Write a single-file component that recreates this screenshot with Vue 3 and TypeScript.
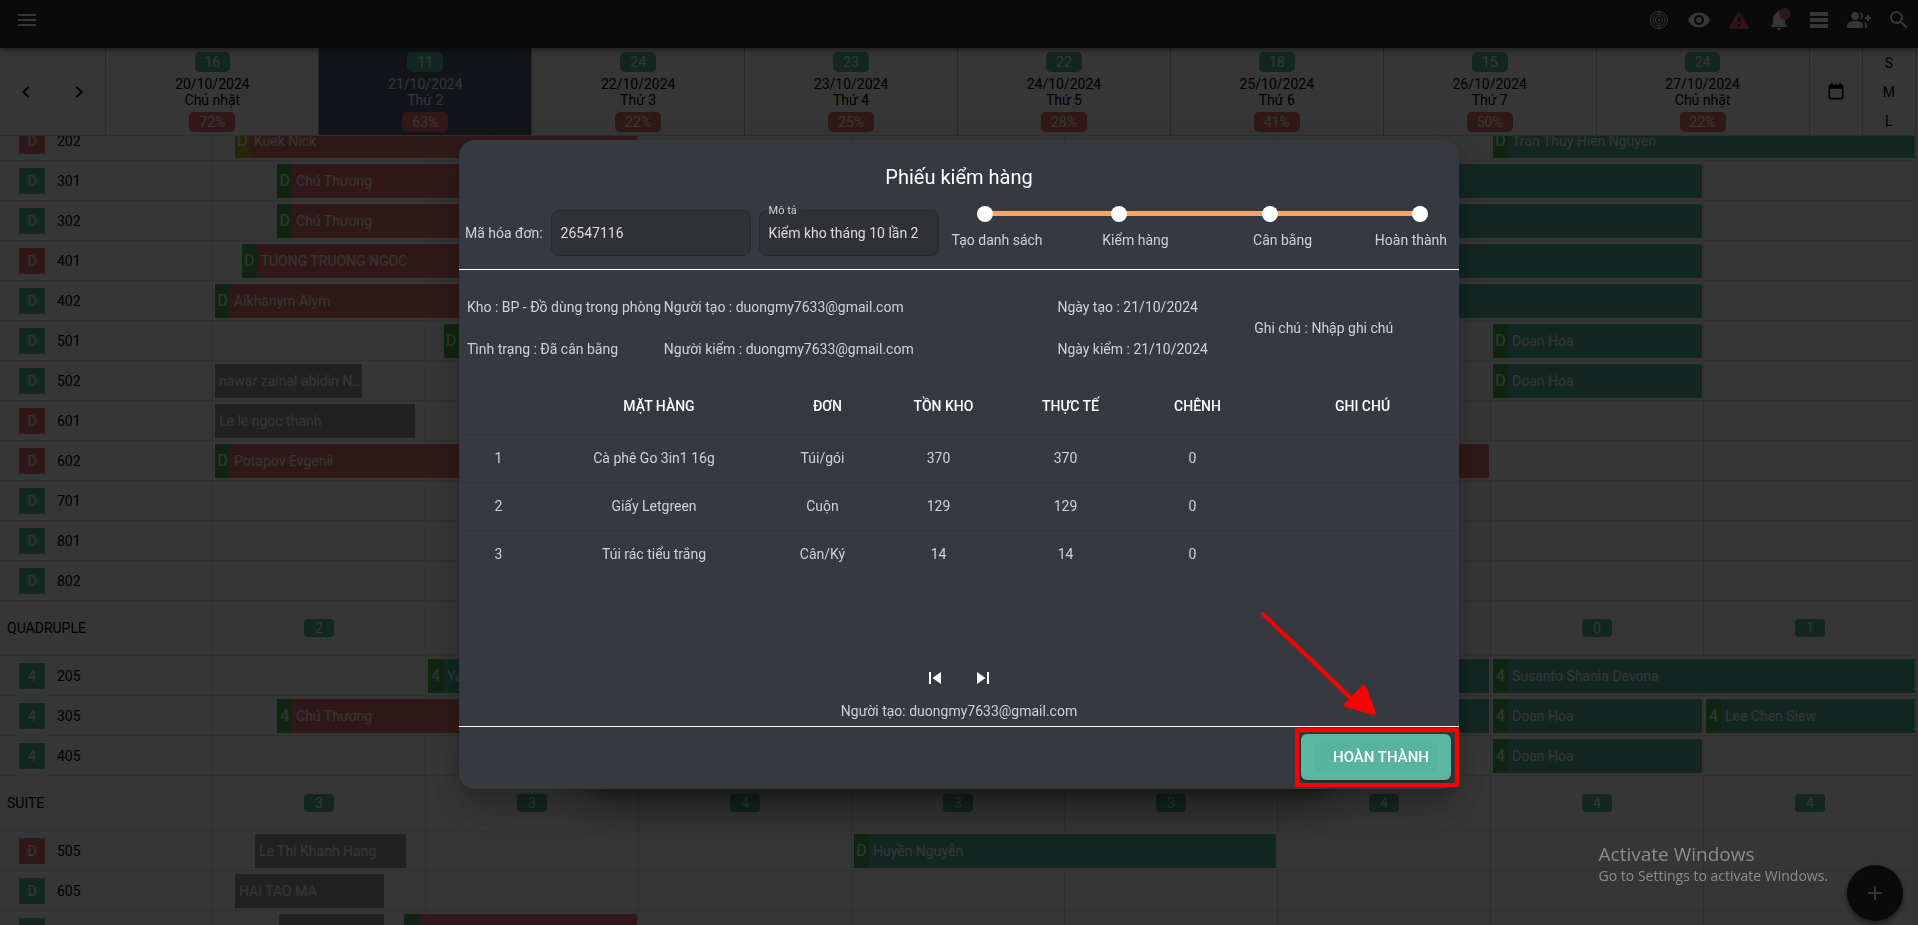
<script setup lang="ts">
import { ref } from 'vue'

type Tone = 'red' | 'teal' | 'grey'

interface Day { free: number; date: string; name: string; rate: string; today?: boolean }
/* start and end are quarter hours counted from the first visible day */
interface Booking { start: number; end: number; tone: Tone; tag?: string; name?: string; late?: boolean }
interface Room { kind: 'room'; id: string; badge: string; busy?: boolean; bookings: Booking[] }
interface Group { kind: 'group'; id: string; counts: (number | null)[] }

const days: Day[] = [
  { free: 16, date: '20/10/2024', name: 'Chủ nhật', rate: '72%' },
  { free: 11, date: '21/10/2024', name: 'Thứ 2', rate: '63%', today: true },
  { free: 24, date: '22/10/2024', name: 'Thứ 3', rate: '22%' },
  { free: 23, date: '23/10/2024', name: 'Thứ 4', rate: '25%' },
  { free: 22, date: '24/10/2024', name: 'Thứ 5', rate: '28%' },
  { free: 18, date: '25/10/2024', name: 'Thứ 6', rate: '41%' },
  { free: 15, date: '26/10/2024', name: 'Thứ 7', rate: '50%' },
  { free: 24, date: '27/10/2024', name: 'Chủ nhật', rate: '22%' },
]

const rows: (Room | Group)[] = [
  { kind: 'room', id: '202', badge: 'D', busy: true, bookings: [
    { start: 9, end: 192, tone: 'red', tag: 'D', name: 'Kuek Nick', late: true },
    { start: 576, end: 768, tone: 'teal', tag: 'D', name: 'Tran Thuy Hien Nguyen' },
  ] },
  { kind: 'room', id: '301', badge: 'D', bookings: [
    { start: 28, end: 192, tone: 'red', tag: 'D', name: 'Chú Thương' },
    { start: 384, end: 672, tone: 'teal' },
  ] },
  { kind: 'room', id: '302', badge: 'D', bookings: [
    { start: 28, end: 192, tone: 'red', tag: 'D', name: 'Chú Thương' },
    { start: 384, end: 672, tone: 'teal' },
  ] },
  { kind: 'room', id: '401', badge: 'D', busy: true, bookings: [
    { start: 12, end: 192, tone: 'red', tag: 'D', name: 'TUONG TRUONG NGOC' },
    { start: 384, end: 672, tone: 'teal' },
  ] },
  { kind: 'room', id: '402', badge: 'D', bookings: [
    { start: 0, end: 192, tone: 'red', tag: 'D', name: 'Aikhanym Alym' },
    { start: 384, end: 672, tone: 'teal' },
  ] },
  { kind: 'room', id: '501', badge: 'D', bookings: [
    { start: 103, end: 192, tone: 'teal', tag: 'D' },
    { start: 576, end: 672, tone: 'teal', tag: 'D', name: 'Doan Hoa' },
  ] },
  { kind: 'room', id: '502', badge: 'D', bookings: [
    { start: 0, end: 68, tone: 'grey', name: 'nawar zainal abidin Noor' },
    { start: 576, end: 672, tone: 'teal', tag: 'D', name: 'Doan Hoa' },
  ] },
  { kind: 'room', id: '601', badge: 'D', busy: true, bookings: [
    { start: 0, end: 92, tone: 'grey', name: 'Le le ngoc thanh' },
  ] },
  { kind: 'room', id: '602', badge: 'D', busy: true, bookings: [
    { start: 0, end: 576, tone: 'red', tag: 'D', name: 'Potapov Evgenii' },
  ] },
  { kind: 'room', id: '701', badge: 'D', bookings: [] },
  { kind: 'room', id: '801', badge: 'D', bookings: [] },
  { kind: 'room', id: '802', badge: 'D', bookings: [] },
  { kind: 'group', id: 'QUADRUPLE', counts: [2, null, null, null, null, null, 0, 1] },
  { kind: 'room', id: '205', badge: '4', bookings: [
    { start: 96, end: 576, tone: 'teal', tag: '4', name: 'Ya' },
    { start: 576, end: 768, tone: 'teal', tag: '4', name: 'Susanto Shania Devona' },
  ] },
  { kind: 'room', id: '305', badge: '4', bookings: [
    { start: 28, end: 192, tone: 'red', tag: '4', name: 'Chú Thương' },
    { start: 384, end: 576, tone: 'teal' },
    { start: 576, end: 672, tone: 'teal', tag: '4', name: 'Doan Hoa' },
    { start: 672, end: 768, tone: 'teal', tag: '4', name: 'Lee Chen Siew' },
  ] },
  { kind: 'room', id: '405', badge: '4', bookings: [
    { start: 576, end: 672, tone: 'teal', tag: '4', name: 'Doan Hoa' },
  ] },
  { kind: 'group', id: 'SUITE', counts: [3, 3, 4, 3, 3, 4, 4, 4] },
  { kind: 'room', id: '505', badge: 'D', busy: true, bookings: [
    { start: 18, end: 88, tone: 'grey', name: 'Le Thi Khanh Hang' },
    { start: 288, end: 480, tone: 'teal', tag: 'D', name: 'Huyền Nguyễn' },
  ] },
  { kind: 'room', id: '605', badge: 'D', bookings: [
    { start: 9, end: 78, tone: 'grey', name: 'HAI TAO MA' },
  ] },
  { kind: 'room', id: '', badge: '', bookings: [
    { start: 29, end: 78, tone: 'grey' },
    { start: 85, end: 192, tone: 'red', tag: ' ' },
  ] },
]

const code = ref('26547116')
const note = ref('Kiểm kho tháng 10 lần 2')
const steps = ['Tạo danh sách', 'Kiểm hàng', 'Cân bằng', 'Hoàn thành']
const headings = ['', 'MẶT HÀNG', 'ĐƠN', 'TỒN KHO', 'THỰC TẾ', 'CHÊNH', 'GHI CHÚ']
const items = [
  { name: 'Cà phê Go 3in1 16g', unit: 'Túi/gói', stock: 370, real: 370, diff: 0 },
  { name: 'Giấy Letgreen', unit: 'Cuộn', stock: 129, real: 129, diff: 0 },
  { name: 'Túi rác tiểu trắng', unit: 'Cân/Ký', stock: 14, real: 14, diff: 0 },
]
</script>

<template>
  <div class="app">
    <header class="topbar">
      <button class="icon-btn menu" aria-label="Menu">
        <svg viewBox="0 0 24 24"><path d="M3 6h18v2H3zm0 5h18v2H3zm0 5h18v2H3z" /></svg>
      </button>
      <nav class="tools">
        <button class="icon-btn" aria-label="Radar">
          <svg viewBox="0 0 24 24" class="line">
            <circle cx="12" cy="12" r="8.5" />
            <path d="M10.600 6.200a6 6 0 0 0 0 11.600M13.400 6.200a6 6 0 0 1 0 11.600" />
            <path d="M10.800 8.700a3.500 3.500 0 0 0 0 6.600M13.200 8.700a3.500 3.500 0 0 1 0 6.600" />
            <path d="M12 4v5.500M12 14.500V20" />
            <circle cx="12" cy="12" r="1" />
          </svg>
        </button>
        <button class="icon-btn" aria-label="Xem">
          <svg viewBox="0 0 24 24"><path d="M12 4.5C7 4.5 2.73 7.61 1 12c1.73 4.39 6 7.5 11 7.5s9.27-3.11 11-7.5c-1.73-4.39-6-7.5-11-7.5zM12 17c-2.76 0-5-2.24-5-5s2.24-5 5-5 5 2.24 5 5-2.24 5-5 5zm0-8c-1.66 0-3 1.34-3 3s1.34 3 3 3 3-1.34 3-3-1.34-3-3-3z" /></svg>
        </button>
        <button class="icon-btn warn" aria-label="Cảnh báo">
          <svg viewBox="0 0 24 24"><path d="M3.5 21h17c1.2 0 1.9-1.2 1.3-2.2L13.2 4.5c-.6-1-1.900-1-2.500 0L2.200 18.800c-.6 1 .1 2.200 1.300 2.200zM13 18h-2v-2h2zm0-4h-2V9h2z" /></svg>
        </button>
        <button class="icon-btn bell" aria-label="Thông báo">
          <svg viewBox="0 0 24 24"><path d="M12 22c1.100 0 2-.9 2-2h-4c0 1.100.89 2 2 2zm6-6v-5c0-3.070-1.640-5.640-4.500-6.320V4c0-.83-.67-1.500-1.500-1.500s-1.500.67-1.500 1.500v.68C7.630 5.360 6 7.920 6 11v5l-2 2v1h16v-1l-2-2z" /></svg>
          <span class="dot"></span>
        </button>
        <button class="icon-btn" aria-label="Danh sách">
          <svg viewBox="0 0 24 24"><path d="M3 4h18v4H3zm0 6h18v4H3zm0 6h18v4H3z" /></svg>
        </button>
        <button class="icon-btn" aria-label="Thêm khách">
          <svg viewBox="0 0 24 24"><path d="M22 9V7h-2v2h-2v2h2v2h2v-2h2V9zM8 12c2.210 0 4-1.790 4-4s-1.790-4-4-4-4 1.790-4 4 1.790 4 4 4zm0 1c-2.670 0-8 1.340-8 4v3h16v-3c0-2.660-5.330-4-8-4zm4.510-8.950C13.430 5.110 14 6.490 14 8s-.57 2.890-1.490 3.950C14.470 11.700 16 10.040 16 8s-1.530-3.700-3.490-3.950zM16.530 13.830C17.420 14.660 18 15.700 18 17v3h2v-3c0-1.450-1.590-2.510-3.470-3.170z" /></svg>
        </button>
        <button class="icon-btn" aria-label="Tìm kiếm">
          <svg viewBox="0 0 24 24"><path d="M15.500 14h-.79l-.28-.27A6.470 6.470 0 0 0 16 9.500 6.500 6.500 0 1 0 9.500 16c1.610 0 3.090-.59 4.230-1.570l.27.28v.79l5 4.990L20.490 19zm-6 0C7.010 14 5 11.990 5 9.500S7.010 5 9.500 5 14 7.010 14 9.500 11.990 14 9.500 14z" /></svg>
        </button>
      </nav>
    </header>

    <section class="days">
      <div class="pager-days">
        <button aria-label="Lùi"><svg viewBox="0 0 24 24"><path d="M15.410 7.410 14 6l-6 6 6 6 1.410-1.410L10.830 12z" /></svg></button>
        <button aria-label="Tiến"><svg viewBox="0 0 24 24"><path d="M10 6 8.590 7.410 13.170 12l-4.580 4.590L10 18l6-6z" /></svg></button>
      </div>
      <div v-for="d in days" :key="d.date" class="day" :class="{ today: d.today }">
        <span class="pill teal">{{ d.free }}</span>
        <span class="date">{{ d.date }}<br />{{ d.name }}</span>
        <span class="pill red">{{ d.rate }}</span>
      </div>
      <button class="calendar" aria-label="Chọn ngày">
        <svg viewBox="0 0 24 24"><path d="M19 19H5V8h14m-3-7v2H8V1H6v2H5c-1.110 0-2 .89-2 2v14a2 2 0 0 0 2 2h14a2 2 0 0 0 2-2V5c0-1.110-.9-2-2-2h-1V1" /></svg>
      </button>
      <div class="sizes">
        <button>S</button>
        <button>M</button>
        <button>L</button>
      </div>
    </section>

    <main class="board">
      <div class="rows">
        <div v-for="(row, i) in rows" :key="i" class="row" :class="row.kind">
          <template v-if="row.kind === 'room'">
            <div class="label">
              <span class="badge" :class="row.busy ? 'red' : 'teal'">{{ row.badge }}</span>
              <span>{{ row.id }}</span>
            </div>
            <div class="timeline">
              <div
                v-for="(b, j) in row.bookings"
                :key="j"
                class="booking"
                :class="b.tone"
                :style="{ gridColumn: `${b.start + 1} / ${b.end + 1}` }"
              >
                <span v-if="b.tag" class="tag" :class="{ late: b.late }">{{ b.tag }}</span>
                <span class="guest">{{ b.name }}</span>
              </div>
            </div>
          </template>
          <template v-else>
            <div class="label">{{ row.id }}</div>
            <div class="counts">
              <div v-for="(c, j) in row.counts" :key="j">
                <span v-if="c !== null" class="count teal">{{ c }}</span>
              </div>
            </div>
          </template>
        </div>
      </div>
    </main>

    <button class="fab" aria-label="Thêm">
      <svg viewBox="0 0 24 24"><path d="M19 13h-6v6h-2v-6H5v-2h6V5h2v6h6z" /></svg>
    </button>

    <div class="backdrop">
      <section class="dialog" role="dialog" aria-labelledby="dialog-title">
        <h1 id="dialog-title">Phiếu kiểm hàng</h1>

        <div class="form">
          <label for="code">Mã hóa đơn:</label>
          <input id="code" v-model="code" class="code" type="text" />
          <fieldset>
            <legend><label for="note">Mô tả</label></legend>
            <input id="note" v-model="note" type="text" />
          </fieldset>
          <div class="stepper">
            <div class="track">
              <i></i><i></i><i></i><i></i>
            </div>
            <ol>
              <li v-for="s in steps" :key="s">{{ s }}</li>
            </ol>
          </div>
        </div>

        <div class="info">
          <span>Kho : BP - Đồ dùng trong phòng</span>
          <span>Người tạo : duongmy7633@gmail.com</span>
          <span>Ngày tạo : 21/10/2024</span>
          <span class="remark">Ghi chú : Nhập ghi chú</span>
          <span>Tình trạng : Đã cân bằng</span>
          <span>Người kiểm : duongmy7633@gmail.com</span>
          <span>Ngày kiểm : 21/10/2024</span>
        </div>

        <div class="table-box">
          <table>
            <colgroup>
              <col class="c-index" /><col class="c-name" /><col class="c-unit" />
              <col class="c-num" /><col class="c-num" /><col class="c-num" /><col />
            </colgroup>
            <thead>
              <tr><th v-for="(h, i) in headings" :key="i">{{ h }}</th></tr>
            </thead>
            <tbody>
              <tr v-for="(it, i) in items" :key="it.name">
                <td>{{ i + 1 }}</td>
                <td>{{ it.name }}</td>
                <td>{{ it.unit }}</td>
                <td>{{ it.stock }}</td>
                <td>{{ it.real }}</td>
                <td>{{ it.diff }}</td>
                <td></td>
              </tr>
            </tbody>
          </table>
        </div>

        <div class="pager">
          <button aria-label="Trang đầu"><svg viewBox="0 0 24 24"><path d="M6 6h2v12H6zm3.500 6 8.500 6V6z" /></svg></button>
          <button aria-label="Trang cuối"><svg viewBox="0 0 24 24"><path d="m6 18 8.500-6L6 6zM16 6v12h2V6z" /></svg></button>
        </div>
        <p class="author">Người tạo: duongmy7633@gmail.com</p>

        <footer>
          <button class="done"><span>HOÀN THÀNH</span></button>
        </footer>

        <div class="mark"></div>
        <svg class="arrow" viewBox="0 0 120 110">
          <path d="M4 4 92 88" />
          <path class="head" d="M105 77 115 103 87 95z" />
        </svg>
      </section>
    </div>

    <aside class="activate">
      <strong>Activate Windows</strong>
      <span>Go to Settings to activate Windows.</span>
    </aside>
  </div>
</template>

<style>
body {
  margin: 0;
  background: #fff;
}
</style>

<style scoped>
.app {
  display: flex;
  flex-direction: column;
  height: 100vh;
  overflow: hidden;
  background: #fff;
  color: #000;
  font: 14px/16px Roboto, "Noto Sans", sans-serif;
}

button {
  display: flex;
  align-items: center;
  justify-content: center;
  padding: 0;
  border: 0;
  background: none;
  color: inherit;
  font: inherit;
  cursor: pointer;
}

svg {
  width: 24px;
  height: 24px;
  fill: currentColor;
}

.teal { background: #57b5a0; }
.red { background: #e57373; }
.grey { background: #9e9e9e; }

.topbar {
  display: flex;
  justify-content: space-between;
  flex: none;
  height: 48px;
  background: #2f2f2f;
  color: #fff;
  box-shadow: 0 2px 6px rgba(0, 0, 0, 0.5);
  z-index: 1;
}

.icon-btn {
  position: relative;
  width: 40px;
  height: 40px;
}

.menu { margin-left: 7px; }

.tools {
  display: flex;
  margin-right: -1px;
}

.warn { color: #e05a5a; }

.topbar .line {
  fill: none;
  stroke: currentColor;
  stroke-width: 1;
}

.dot {
  position: absolute;
  top: 8px;
  right: 8px;
  width: 12px;
  height: 12px;
  border-radius: 50%;
  background: #e57373;
}

.days {
  display: grid;
  grid-template-columns: 2fr repeat(8, 4fr) 1fr 1fr;
  flex: none;
  height: 88px;
  margin-right: 2px;
}

.days > * {
  box-sizing: border-box;
  min-width: 0;
  border-right: 1px solid #c4c4c4;
  border-bottom: 1px solid #d8d8d8;
}

.pager-days {
  display: grid;
  grid-template-columns: 1fr 1fr;
}

.day {
  display: flex;
  flex-direction: column;
  align-items: center;
  gap: 4px;
  padding-top: 4px;
  text-align: center;
}

.today {
  background: #52647a;
  color: #fff;
}

.pill {
  padding: 0 10px;
  border-radius: 5px;
  color: #fff;
  line-height: 20px;
}

.calendar {
  height: 100%;
}

.calendar svg {
  width: 20px;
  height: 20px;
}

.sizes {
  display: grid;
  grid-template-rows: repeat(3, 1fr);
}

.board {
  flex: 1;
  min-height: 0;
  overflow: hidden;
  margin-right: 1px;
}

.rows { margin-top: -15px; }

.row {
  display: grid;
  grid-template-columns: 1fr 8fr;
  box-sizing: border-box;
  height: 40px;
  border-bottom: 1px solid #e4e4e4;
}

.group { height: 55px; }

.label {
  display: flex;
  align-items: center;
  gap: 12px;
  box-sizing: border-box;
  padding-left: 19px;
  border-right: 1px solid #dcdcdc;
}

.group .label { padding-left: 7px; }

.badge {
  width: 26px;
  height: 26px;
  color: #fff;
  line-height: 26px;
  text-align: center;
}

.timeline {
  display: grid;
  grid-template-columns: repeat(768, minmax(0, 1fr));
  grid-template-rows: 34px;
  align-content: center;
  background: repeating-linear-gradient(to right, transparent 0, transparent calc(12.5% - 1px), #dcdcdc calc(12.5% - 1px), #dcdcdc 12.5%);
}

.booking {
  display: flex;
  align-items: center;
  grid-row: 1;
  min-width: 0;
  margin: 0 2px;
  overflow: hidden;
  color: #fff;
}

.tag {
  flex: none;
  width: 15px;
  height: 34px;
  background: #4caf50;
  font-size: 16px;
  line-height: 34px;
  text-align: center;
}

.tag.late { background: #afb42b; }

.guest {
  padding-left: 4px;
  overflow: hidden;
  text-overflow: ellipsis;
  white-space: nowrap;
}

.counts {
  display: grid;
  grid-template-columns: repeat(8, 1fr);
}

.counts > div {
  display: flex;
  align-items: center;
  justify-content: center;
  border-right: 1px solid #dcdcdc;
}

.count {
  padding: 0 11px;
  border-radius: 4px;
  color: #fff;
  line-height: 18px;
}

.fab {
  position: fixed;
  right: 15px;
  bottom: 4px;
  width: 56px;
  height: 56px;
  border-radius: 50%;
  background: #2f2f2f;
  color: #fff;
  box-shadow: 0 3px 6px rgba(0, 0, 0, 0.5);
}

.backdrop {
  position: fixed;
  inset: 0;
  display: flex;
  align-items: center;
  justify-content: center;
  padding-top: 3px;
  background: rgba(0, 0, 0, 0.79);
  z-index: 2;
}

.dialog {
  position: relative;
  width: 1000px;
  max-width: 100%;
  border-radius: 16px;
  background: #373941;
  color: #d0d1d4;
  box-shadow: 0 11px 15px -7px rgba(0, 0, 0, 0.2), 0 24px 38px 3px rgba(0, 0, 0, 0.14), 0 9px 46px 8px rgba(0, 0, 0, 0.12);
}

.dialog::before {
  content: "";
  position: absolute;
  inset: 0 125px;
  z-index: -1;
  border-radius: 16px;
  box-shadow: 0 11px 15px -7px rgba(0, 0, 0, 0.3), 0 24px 38px 3px rgba(0, 0, 0, 0.2);
}

h1 {
  margin: 0;
  padding-top: 25px;
  color: #fff;
  font-size: 20px;
  font-weight: 400;
  line-height: 24px;
  text-align: center;
}

.form {
  display: flex;
  align-items: center;
  height: 80px;
  padding: 0 12px 0 6px;
  border-bottom: 1px solid #fff;
}

.form input {
  box-sizing: border-box;
  color: #dcdcde;
  font: inherit;
}

.code {
  width: 200px;
  height: 46px;
  margin: 8px 8px 0;
  padding: 0 9px;
  border: 1px solid #28292d;
  border-radius: 8px;
  background: #303135;
}

.form > label { padding-top: 8px; }

fieldset {
  box-sizing: border-box;
  width: 180px;
  height: 46px;
  min-width: 0;
  margin: 8px 0 0;
  padding: 0;
  border: 1px solid #28292d;
  border-radius: 8px;
  background: #303135;
}

legend {
  height: 1px;
  margin-left: 5px;
  padding: 0 4px;
  font-size: 11px;
  line-height: 1px;
}

fieldset input {
  width: 100%;
  height: 44px;
  padding: 0 9px;
  border: 0;
  background: none;
}

.stepper {
  flex: 1;
  margin: 0 0 4px 13px;
}

.track {
  display: grid;
  grid-template-columns: 134fr 150fr 150fr 0;
  align-items: center;
  margin: 0 27px 0 33px;
  background: linear-gradient(#fda262, #fda262) center / 100% 5px no-repeat;
}

.track i {
  width: 16px;
  height: 16px;
  margin-left: -8px;
  border-radius: 50%;
  background: #fff;
}

ol {
  display: grid;
  grid-template-columns: 150fr 150fr 120fr 73fr;
  margin: 10px 0 0;
  padding: 0;
  list-style: none;
  white-space: nowrap;
}

li:last-child { text-align: right; }

.info {
  display: grid;
  grid-template-columns: 1fr 2fr 1fr 1fr;
  padding: 16px 8px 8px;
  line-height: 42px;
  white-space: nowrap;
}

.remark {
  grid-row: span 2;
  align-self: center;
}

.table-box { min-height: 272px; }

table {
  width: 100%;
  border-collapse: collapse;
  table-layout: fixed;
  text-align: center;
}

.c-index { width: 79px; }
.c-name { width: 232px; }
.c-unit { width: 105px; }
.c-num { width: 127px; }

th {
  height: 56px;
  padding: 0 0 0 10px;
  color: #fff;
  font-weight: 500;
}

td {
  height: 47px;
  padding: 0;
  border-top: 1px solid #31333a;
}

.pager {
  display: flex;
  justify-content: center;
  gap: 24px;
  padding-top: 16px;
  color: #fff;
}

.author {
  margin: 13px 0 0;
  padding-bottom: 7px;
  border-bottom: 1px solid #fff;
  text-align: center;
}

footer {
  display: flex;
  justify-content: flex-end;
  padding: 7px 8px 9px;
}

.done {
  width: 150px;
  height: 46px;
  border-radius: 6px;
  background: #5ab7a2;
  color: #fff;
  font-size: 15px;
  font-weight: 500;
  box-shadow: 0 2px 4px rgba(0, 0, 0, 0.4);
}

.done span {
  box-sizing: border-box;
  width: 124px;
  padding-left: 10px;
  border-radius: 4px;
  background: #58b39e;
  line-height: 28px;
}

.mark {
  position: absolute;
  right: 0;
  bottom: 2px;
  box-sizing: border-box;
  width: 164px;
  height: 59px;
  border: 4px solid #f00;
  border-radius: 2px;
  pointer-events: none;
}

.arrow {
  position: absolute;
  right: 80px;
  bottom: 69px;
  width: 120px;
  height: 110px;
  fill: none;
  stroke: #f00;
  stroke-width: 4;
  stroke-linecap: round;
  stroke-linejoin: round;
  pointer-events: none;
}

.arrow .head { fill: #f00; }

.activate {
  position: fixed;
  right: 90px;
  bottom: 39px;
  display: flex;
  flex-direction: column;
  color: #8c8c8c;
  font-family: "Open Sans", "Noto Sans", sans-serif;
  z-index: 3;
  pointer-events: none;
}

.activate strong {
  font-size: 19px;
  font-weight: 400;
  line-height: 24px;
}

.activate span {
  font-size: 14px;
  line-height: 20px;
}
</style>
